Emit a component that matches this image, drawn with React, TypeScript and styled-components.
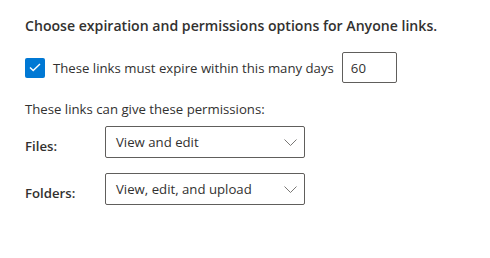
import styled, { createGlobalStyle } from "styled-components";

const GlobalStyle = createGlobalStyle`
  body {
    margin: 0;
    background: #ffffff;
    font-family: "Open Sans", "Liberation Sans", sans-serif;
    color: #323130;
  }
`;

const Page = styled.div`
  padding: 14px 25px 0 25px;
  display: flex;
  flex-direction: column;
`;

const Heading = styled.h2`
  margin: 0;
  font-size: 14.1px;
  font-weight: 600;
  line-height: 24px;
`;

const CheckRow = styled.label`
  display: flex;
  align-items: center;
  margin-top: 14px;
  gap: 8px;
  font-size: 13.2px;
`;

const Box = styled.span`
  width: 20px;
  height: 20px;
  border-radius: 2px;
  background: #0078d4;
  display: flex;
  align-items: center;
  justify-content: center;
  flex-shrink: 0;
`;

const DaysInput = styled.input`
  width: 55px;
  height: 31px;
  box-sizing: border-box;
  border: 1px solid #605e5c;
  border-radius: 2px;
  padding: 0 8px;
  font: inherit;
  color: #323130;
`;

const Caption = styled.div`
  margin-top: 16px;
  font-size: 13.2px;
  line-height: 20px;
`;

const FieldRow = styled.div<{ $gap: number }>`
  display: flex;
  align-items: center;
  margin-top: ${(p) => p.$gap}px;
`;

const FieldLabel = styled.span`
  width: 80px;
  font-size: 13.2px;
  font-weight: 600;
  padding-top: 7px;
`;

const Select = styled.div`
  width: 200px;
  height: 32px;
  box-sizing: border-box;
  border: 1px solid #605e5c;
  border-radius: 2px;
  display: flex;
  align-items: center;
  justify-content: space-between;
  padding: 0 7px 0 10px;
  font-size: 13.2px;
`;

function Chevron() {
  return (
    <svg width="13" height="7" viewBox="0 0 13 7" fill="none">
      <path d="M0.5 0.5 L6.5 6.5 L12.5 0.5" stroke="#797775" strokeWidth="1" />
    </svg>
  );
}

export default function App() {
  return (
    <>
      <GlobalStyle />
      <Page>
        <Heading>Choose expiration and permissions options for Anyone links.</Heading>
        <CheckRow>
          <Box>
            <svg width="12" height="9" viewBox="0 0 12 9" fill="none">
              <path d="M1 4.5 L4.2 7.5 L11 1" stroke="#ffffff" strokeWidth="1.4" />
            </svg>
          </Box>
          These links must expire within this many days
          <DaysInput defaultValue="60" />
        </CheckRow>
        <Caption>These links can give these permissions:</Caption>
        <FieldRow $gap={7}>
          <FieldLabel>Files:</FieldLabel>
          <Select>
            View and edit
            <Chevron />
          </Select>
        </FieldRow>
        <FieldRow $gap={15}>
          <FieldLabel>Folders:</FieldLabel>
          <Select>
            View, edit, and upload
            <Chevron />
          </Select>
        </FieldRow>
      </Page>
    </>
  );
}
